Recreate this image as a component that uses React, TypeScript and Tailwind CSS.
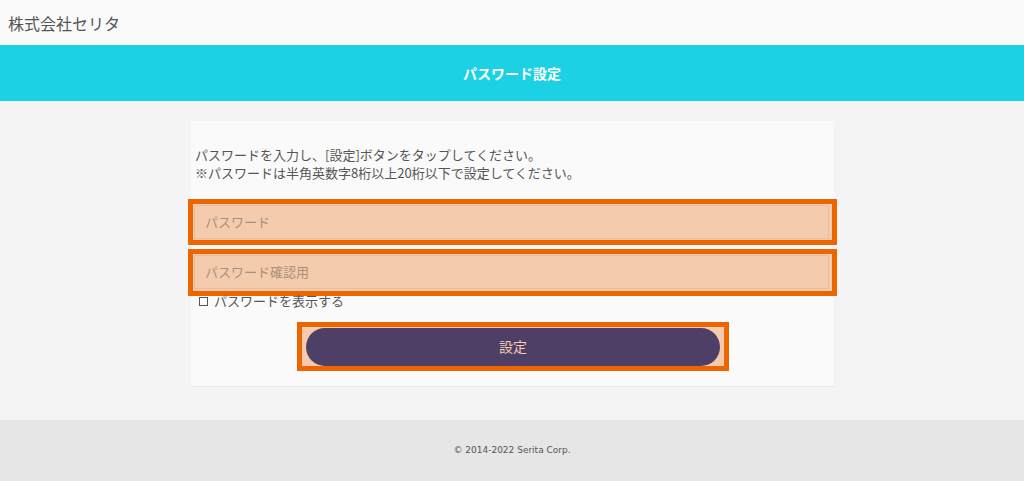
export default function App() {
  const font = { fontFamily: '"Noto Sans CJK JP", "Noto Sans", sans-serif' };
  return (
    <div className="w-[1024px] h-[481px] flex flex-col bg-[#f4f4f4] text-[#555]" style={font}>
      <header className="h-[45px] bg-[#fafafa] flex items-center pl-[8px]">
        <span className="text-[16px] text-[#555] leading-none">株式会社セリタ</span>
      </header>
      <div className="h-[56px] bg-[#1bd1e3] flex items-center justify-center">
        <span className="text-white font-bold text-[14px] leading-none">パスワード設定</span>
      </div>
      <main className="flex-1 pt-[20px]">
        <div className="ml-[191px] w-[643px] h-[266px] bg-[#fafafa] border-b border-[#ebebeb] pt-[25px] px-[3px]">
          <p className="text-[13px] leading-[18px] text-[#555] pl-[1px]">
            パスワードを入力し、[設定]ボタンをタップしてください。
            <br />
            ※パスワードは半角英数字8桁以上20桁以下で設定してください。
          </p>
          <div className="mt-[17px] -mx-[6px] flex flex-col gap-[4px]">
            <div className="h-[46px] border-[5px] border-[#ec6500] bg-[#f5cbad] p-[1px] pr-[3px]">
              <div className="h-[34px] border border-[#e6bfa3] flex items-center pl-[10px] text-[13px] text-[#a88f80]">
                パスワード
              </div>
            </div>
            <div className="h-[47px] border-[5px] border-[#ec6500] bg-[#f5cbad] p-[1px] pr-[3px]">
              <div className="h-[34px] border border-[#e6bfa3] flex items-center pl-[10px] text-[13px] text-[#a88f80]">
                パスワード確認用
              </div>
            </div>
          </div>
          <label className="-mt-[3px] flex items-center gap-[6px] pl-[5px] text-[13px] leading-[16px] text-[#555]">
            <span className="w-[9px] h-[9px] border border-[#555] bg-white inline-block" />
            パスワードを表示する
          </label>
          <div className="mt-[13px] flex justify-center pl-[1px]">
            <div className="w-[432px] h-[49px] border-[5px] border-[#ec6500] bg-[#f5cbad] flex items-center justify-center">
              <div className="w-[414px] h-[38px] rounded-full bg-[#4e3f66] flex items-center justify-center text-[14px] text-[#f3cbb0]">
                設定
              </div>
            </div>
          </div>
        </div>
      </main>
      <footer className="h-[61px] bg-[#e6e6e6] flex items-center justify-center">
        <span className="text-[9px] text-[#555]" style={{ fontFamily: '"DejaVu Sans", sans-serif' }}>
          © 2014-2022 Serita Corp.
        </span>
      </footer>
    </div>
  );
}
